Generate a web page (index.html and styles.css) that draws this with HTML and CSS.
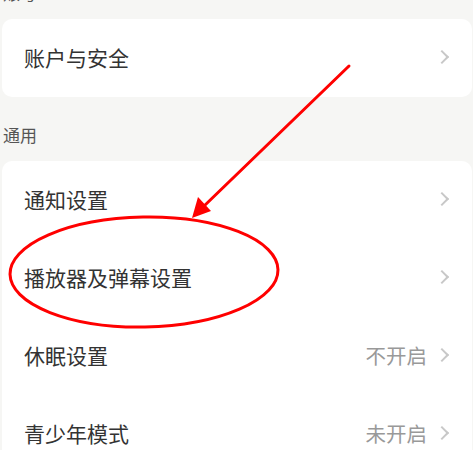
FILE: index.html
```html
<!DOCTYPE html>
<html lang="zh-CN">
<head>
<meta charset="utf-8">
<link rel="stylesheet" href="styles.css">
</head>
<body>
<div class="page">
  <div class="section-title">账号</div>
  <div class="card">
    <div class="row"><span class="label">账户与安全</span><span class="right"><span class="chev"></span></span></div>
  </div>
  <div class="section-title">通用</div>
  <div class="card">
    <div class="row"><span class="label">通知设置</span><span class="right"><span class="chev"></span></span></div>
    <div class="row"><span class="label">播放器及弹幕设置</span><span class="right"><span class="chev"></span></span></div>
    <div class="row"><span class="label">休眠设置</span><span class="right"><span class="value">不开启</span><span class="chev"></span></span></div>
    <div class="row"><span class="label">青少年模式</span><span class="right"><span class="value">未开启</span><span class="chev"></span></span></div>
  </div>
</div>
<svg class="annot" width="473" height="450" viewBox="0 0 473 450">
  <line x1="349" y1="66" x2="203" y2="207" stroke="#f00" stroke-width="3" stroke-linecap="round"/>
  <polygon points="192,218 198,197 211,211" fill="#f00"/>
  <ellipse cx="144" cy="272" rx="134" ry="55" fill="none" stroke="#f00" stroke-width="3" transform="rotate(-1 144 272)"/>
</svg>
</body>
</html>
```
FILE: styles.css
```css
html, body {
  margin: 0;
  padding: 0;
  background: #f6f6f4;
}
body {
  width: 473px;
  height: 450px;
  overflow: hidden;
  position: relative;
  font-family: "Noto Sans CJK SC", "Noto Sans", sans-serif;
}
.page {
  margin-top: -45px;
  padding: 0 1px 0 2px;
}
.section-title {
  padding: 26px 1px 14px;
  height: 24px;
  line-height: 24px;
  font-size: 17px;
  color: #555;
}
.card {
  background: #fff;
  border-radius: 10px;
}
.row {
  box-sizing: border-box;
  height: 78px;
  display: flex;
  align-items: center;
  justify-content: space-between;
  padding: 0 23px 3px 22px;
}
.label {
  font-size: 21px;
  color: #333;
}
.right {
  display: flex;
  align-items: center;
  gap: 10px;
}
.value {
  font-size: 20.5px;
  color: #999;
}
.chev {
  width: 8px;
  height: 8px;
  border-top: 2px solid #c8c8c8;
  border-right: 2px solid #c8c8c8;
  transform: rotate(45deg);
  margin-right: 2px;
}
.annot {
  position: absolute;
  left: 0;
  top: 0;
}
```
